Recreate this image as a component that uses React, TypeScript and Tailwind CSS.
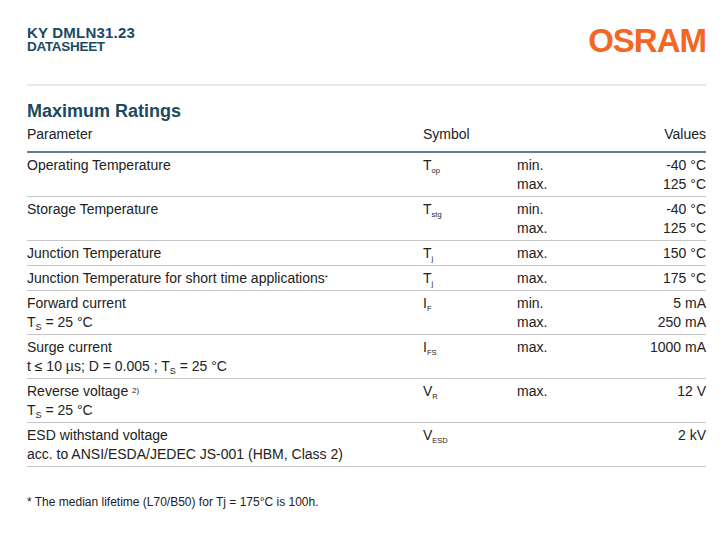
import type { ReactNode } from 'react';

type Row = {
  param: ReactNode;
  symbol: ReactNode;
  limits: string[];
  values: string[];
};

const Sym = ({ base, sub }: { base: string; sub: string }) => (
  <span>
    {base}
    <sub className="relative top-[3px] text-[7.5px] leading-none">{sub}</sub>
  </span>
);

const Ts = () => (
  <>
    T<sub className="relative top-[3px] text-[9px] leading-none">S</sub>
  </>
);

const rows: Row[] = [
  { param: 'Operating Temperature', symbol: <Sym base="T" sub="op" />, limits: ['min.', 'max.'], values: ['-40 °C', '125 °C'] },
  { param: 'Storage Temperature', symbol: <Sym base="T" sub="stg" />, limits: ['min.', 'max.'], values: ['-40 °C', '125 °C'] },
  { param: 'Junction Temperature', symbol: <Sym base="T" sub="j" />, limits: ['max.'], values: ['150 °C'] },
  {
    param: (
      <>
        Junction Temperature for short time applications
        <sup className="relative -top-[3px] text-[8px] leading-none">*</sup>
      </>
    ),
    symbol: <Sym base="T" sub="j" />,
    limits: ['max.'],
    values: ['175 °C'],
  },
  {
    param: (
      <>
        <div>Forward current</div>
        <div>
          <Ts /> = 25 °C
        </div>
      </>
    ),
    symbol: <Sym base="I" sub="F" />,
    limits: ['min.', 'max.'],
    values: ['5 mA', '250 mA'],
  },
  {
    param: (
      <>
        <div>Surge current</div>
        <div>
          t ≤ 10 µs; D = 0.005 ; <Ts /> = 25 °C
        </div>
      </>
    ),
    symbol: <Sym base="I" sub="FS" />,
    limits: ['max.'],
    values: ['1000 mA'],
  },
  {
    param: (
      <>
        <div>
          Reverse voltage <sup className="relative -top-[3px] text-[8px] leading-none">2)</sup>
        </div>
        <div>
          <Ts /> = 25 °C
        </div>
      </>
    ),
    symbol: <Sym base="V" sub="R" />,
    limits: ['max.'],
    values: ['12 V'],
  },
  {
    param: (
      <>
        <div>ESD withstand voltage</div>
        <div>acc. to ANSI/ESDA/JEDEC JS-001 (HBM, Class 2)</div>
      </>
    ),
    symbol: <Sym base="V" sub="ESD" />,
    limits: [],
    values: ['2 kV'],
  },
];

export default function App() {
  return (
    <div className="min-h-screen bg-white pl-[27px] pr-[19px] pt-[25px] text-[#222222] font-['Liberation_Sans',Arial,sans-serif]">
      <header className="flex items-start justify-between">
        <div className="text-[#1b4a5f] font-bold">
          <div className="text-[15px] leading-[15px] tracking-[0.2px]">KY DMLN31.23</div>
          <div className="text-[13.5px] leading-[14px] tracking-[-0.3px]">DATASHEET</div>
        </div>
        <div className="text-[33px] font-bold leading-[32px] tracking-[-1px] text-[#f26725]">OSRAM</div>
      </header>

      <div className="mt-[27px] h-[2px] bg-[#e4e9ef]" />

      <h1 className="mt-[14px] text-[18px] font-bold leading-[22px] text-[#1b4a5f]">Maximum Ratings</h1>

      <div className="mt-[3px] text-[14px] leading-[19px]">
        <div className="grid grid-cols-[396px_94px_1fr_auto] border-b-2 border-[#5d8391] pb-[7px]">
          <div>Parameter</div>
          <div>Symbol</div>
          <div />
          <div className="text-right">Values</div>
        </div>

        {rows.map((r, i) => (
          <div key={i} className="grid grid-cols-[396px_94px_1fr_auto] border-b border-[#c4c4c4] pt-[3px] pb-[2px]">
            <div>{r.param}</div>
            <div>{r.symbol}</div>
            <div>
              {r.limits.map((l) => (
                <div key={l}>{l}</div>
              ))}
            </div>
            <div className="text-right">
              {r.values.map((v) => (
                <div key={v}>{v}</div>
              ))}
            </div>
          </div>
        ))}
      </div>

      <p className="mt-[27px] text-[12px] leading-[16px]">* The median lifetime (L70/B50) for Tj = 175°C is 100h.</p>
    </div>
  );
}
